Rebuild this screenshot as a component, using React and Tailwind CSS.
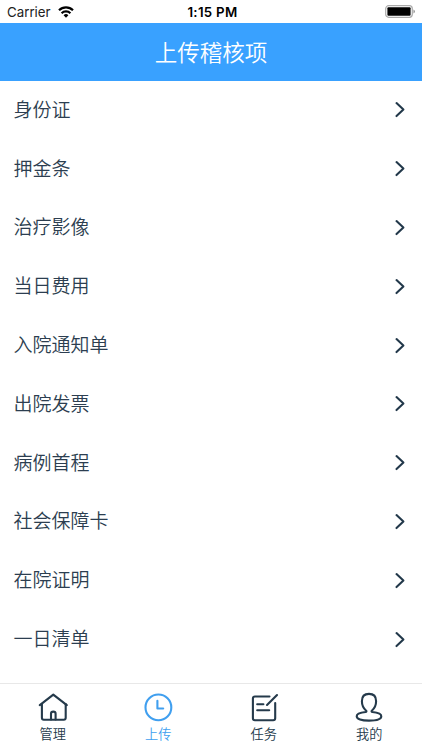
import React from "react";

const items = [
  "身份证",
  "押金条",
  "治疗影像",
  "当日费用",
  "入院通知单",
  "出院发票",
  "病例首程",
  "社会保障卡",
  "在院证明",
  "一日清单",
];

const tabs = [
  {
    name: "管理",
    icon: (
      <>
        <path d="M1.8 13.2 15.3 2.6l13.5 10.6" />
        <path d="M3.9 12v13.8q0 1.9 1.9 1.9h20q1.9 0 1.9-1.9V12" />
        <path d="M13 27.5v-5.7q0-2.2 2.3-2.2t2.3 2.2v5.7" />
      </>
    ),
  },
  {
    name: "上传",
    active: true,
    icon: (
      <>
        <circle cx="15.4" cy="15.4" r="12.9" />
        <path d="M14.4 8.800v7.700h5.800" />
      </>
    ),
  },
  {
    name: "任务",
    icon: (
      <>
        <path d="M20.5 4.5H5.9q-2 0-2 2v19.8q0 2 2 2h18.300q2 0 2-2V11" />
        <path d="M18 13 28 3" />
        <path d="M8.200 12.300h6.200M8.200 18.300h12" />
      </>
    ),
  },
  {
    name: "我的",
    icon: (
      <path d="M12.200 18.700C9.400 16.300 7.900 13 7.900 9.200 7.900 4.400 10.400 1.900 15 1.900s7.100 2.500 7.100 7.300c0 3.800-1.500 7.100-4.300 9.500-.5.6-.2 1.200.6 1.300 5.200.5 8.900 1.800 8.900 4.200 0 2.800-4.700 4.400-12.300 4.400S2.700 27 2.700 24.200c0-2.400 3.700-3.700 8.900-4.200.8-.1 1.100-.7.600-1.300z" />
    ),
  },
];

function StatusBar() {
  return (
    <div className="relative flex h-[23px] shrink-0 items-center justify-between px-[7px] text-[13.5px] leading-[23px] text-[#222]">
      <div className="flex items-center gap-[7px]">
        <span className="pt-px text-[13.3px]">Carrier</span>
        <svg width="16" height="12" viewBox="0 0 16 12" fill="none" stroke="#000" strokeWidth="2.2">
          <path d="M1 4.300a10 10 0 0 1 14 0" />
          <path d="M3.600 7.200a6.300 6.300 0 0 1 8.800 0" />
          <path d="M8 11.700 5.600 9.300a3.400 3.400 0 0 1 4.800 0z" fill="#000" stroke="none" />
        </svg>
      </div>
      <span className="absolute inset-x-0 top-px pl-[3px] text-center text-[13.3px] font-semibold tracking-[0.3px] text-black">
        1:15 PM
      </span>
      <svg width="30" height="13" viewBox="0 0 30 13">
        <rect x="0.700" y="0.700" width="26.600" height="11.600" rx="3" fill="none" stroke="#aaa" strokeWidth="1.200" />
        <rect x="2.400" y="2.200" width="23.200" height="8.600" rx="1" fill="#000" />
        <path d="M28.500 4.600q1.300.5 1.300 1.900t-1.300 1.900z" fill="#888" />
      </svg>
    </div>
  );
}

export default function App() {
  return (
    <div className="flex h-screen w-full flex-col overflow-hidden bg-white font-[Inter,'Noto_Sans_CJK_SC',sans-serif] text-[#2c3e50]">
      <StatusBar />
      <header className="flex h-[58px] shrink-0 items-center justify-center bg-[#39a1ff] pt-px text-[22.5px] font-[350] text-white">
        上传稽核项
      </header>
      <ul className="min-h-0 flex-1 overflow-hidden font-[350]">
        {items.map((item) => (
          <li
            key={item}
            className="flex h-[58.8px] items-center justify-between pl-[13.5px] pr-4 text-[19px]"
          >
            <span className="pt-[1.5px]">{item}</span>
            <svg className="text-[#22384a]" width="12" height="18" viewBox="0 0 12 18" fill="none" stroke="currentColor" strokeWidth="2.1" strokeLinecap="round" strokeLinejoin="round">
              <path d="M2.500 2.100 9.400 8.600l-6.900 6.500" />
            </svg>
          </li>
        ))}
      </ul>
      <nav className="grid h-[67px] shrink-0 grid-cols-4 border-t border-[#e8e8e8] font-[350]">
        {tabs.map((tab) => (
          <div
            key={tab.name}
            className={`flex flex-col items-center pt-2 ${tab.active ? "text-[#409fef]" : "text-[#253a4b]"}`}
          >
            <svg width="30" height="30" viewBox="0 0 30 30" fill="none" stroke="currentColor" strokeWidth="2.1" strokeLinecap="round" strokeLinejoin="round">
              {tab.icon}
            </svg>
            <span className="mt-[2px] text-[13.2px] leading-5">{tab.name}</span>
          </div>
        ))}
      </nav>
    </div>
  );
}
